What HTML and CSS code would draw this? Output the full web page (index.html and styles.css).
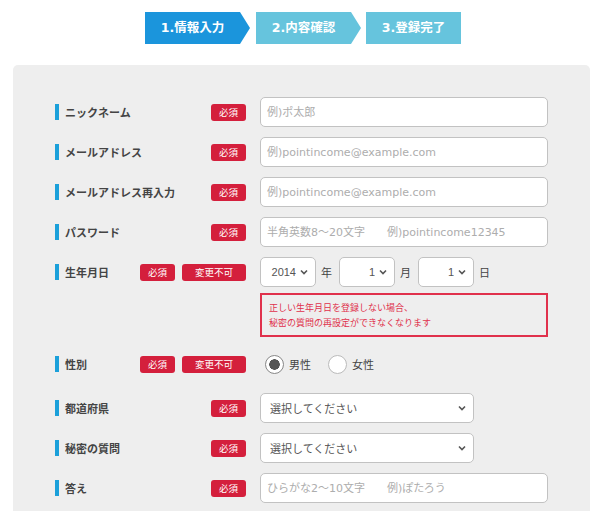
FILE: index.html
```html
<!DOCTYPE html>
<html>
  <head>
    <meta charset="utf-8">
    <title>会員登録</title>
    <link rel="stylesheet" href="styles.css">
  </head>
  <body>
    <ol class="steps">
      <li class="step step-arrow step-now">1.情報入力</li>
      <li class="step step-arrow">2.内容確認</li>
      <li class="step">3.登録完了</li>
    </ol>

    <form class="panel">
      <div class="row">
        <div class="head"><span class="label">ニックネーム</span><span class="badge">必須</span></div>
        <input class="text" type="text" placeholder="例)ポ太郎">
      </div>
      <div class="row">
        <div class="head"><span class="label">メールアドレス</span><span class="badge">必須</span></div>
        <input class="text" type="text" placeholder="例)pointincome@example.com">
      </div>
      <div class="row">
        <div class="head"><span class="label">メールアドレス再入力</span><span class="badge">必須</span></div>
        <input class="text" type="text" placeholder="例)pointincome@example.com">
      </div>
      <div class="row">
        <div class="head"><span class="label">パスワード</span><span class="badge">必須</span></div>
        <input class="text" type="password" placeholder="半角英数8～20文字　　例)pointincome12345">
      </div>
      <div class="row">
        <div class="head"><span class="label">生年月日</span><span class="badge">必須</span><span class="badge badge-wide">変更不可</span></div>
        <div class="field">
          <div class="birth">
            <select class="sel sel-num"><option>2014</option></select><span class="unit">年</span>
            <select class="sel sel-num"><option>1</option></select><span class="unit">月</span>
            <select class="sel sel-num"><option>1</option></select><span class="unit">日</span>
          </div>
          <p class="note">正しい生年月日を登録しない場合、<br>秘密の質問の再設定ができなくなります</p>
        </div>
      </div>
      <div class="row row-gender">
        <div class="head"><span class="label">性別</span><span class="badge">必須</span><span class="badge badge-wide">変更不可</span></div>
        <div class="radios">
          <label class="radio"><input type="radio" name="sex" checked><i></i>男性</label>
          <label class="radio"><input type="radio" name="sex"><i></i>女性</label>
        </div>
      </div>
      <div class="row">
        <div class="head"><span class="label">都道府県</span><span class="badge">必須</span></div>
        <select class="sel sel-wide"><option>選択してください</option></select>
      </div>
      <div class="row">
        <div class="head"><span class="label">秘密の質問</span><span class="badge">必須</span></div>
        <select class="sel sel-wide"><option>選択してください</option></select>
      </div>
      <div class="row">
        <div class="head"><span class="label">答え</span><span class="badge">必須</span></div>
        <input class="text" type="text" placeholder="ひらがな2～10文字　　例)ぽたろう">
      </div>
    </form>
  </body>
</html>
```

FILE: styles.css
```css
*{
  margin: 0;
  padding: 0;
  box-sizing: border-box;
}
body{
  background: #fff;
  font-family: "DejaVu Sans", "Noto Sans CJK JP", sans-serif;
  color: #444;
}

/* steps */
.steps{
  list-style: none;
  display: flex;
  padding: 12px 0 0 145px;
}
.step{
  width: 95px;
  height: 32px;
  line-height: 32px;
  text-align: center;
  color: #fff;
  font-size: 12.5px;
  font-weight: bold;
  background: #66c4dd;
}
.step-arrow{
  width: 105px;
  padding-right: 10px;
  margin-right: 6px;
  clip-path: polygon(0 0, 95px 0, 105px 50%, 95px 100%, 0 100%);
}
.step-arrow + .step-arrow{
  margin-right: 5px;
}
.step-now{
  background: #1b95dc;
}

/* panel */
.panel{
  margin: 21px 10px 0 13px;
  padding: 32px 42px 40px;
  background: #eeeeee;
  border-radius: 5px;
}
.row{
  display: flex;
  align-items: flex-start;
  margin-bottom: 10px;
}
.head{
  width: 191px;
  height: 30px;
  margin-right: 14px;
  display: flex;
  align-items: center;
  gap: 7px;
}
.label{
  display: flex;
  align-items: center;
  margin-right: auto;
  font-family: "Noto Sans CJK JP", sans-serif;
  font-size: 11px;
  font-weight: bold;
  color: #444;
}
.label::before{
  content: "";
  width: 4px;
  height: 16px;
  margin-right: 6px;
  background: #1ba0da;
}
.badge{
  width: 35px;
  height: 17px;
  line-height: 17px;
  text-align: center;
  border-radius: 3px;
  background: #d41f3c;
  color: #fff;
  font-family: "Noto Sans CJK JP", sans-serif;
  font-size: 9.5px;
}
.badge-wide{
  width: 64px;
}

.text{
  width: 288px;
  height: 30px;
  padding: 0 6px;
  border: 1px solid #c2c2c2;
  border-radius: 5px;
  background: #fff;
  font-family: "DejaVu Sans", "Noto Sans CJK JP", sans-serif;
  font-size: 11px;
  color: #333;
}
.text::placeholder{
  color: #adadad;
}

.sel{
  height: 30px;
  border: 1px solid #c2c2c2;
  border-radius: 5px;
  background: #fff url("data:image/svg+xml,%3Csvg xmlns='http://www.w3.org/2000/svg' width='8' height='6'%3E%3Cpath d='M1 1.5l3 3 3-3' fill='none' stroke='%23555' stroke-width='1.6'/%3E%3C/svg%3E") no-repeat right 7px center;
  appearance: none;
  -webkit-appearance: none;
  font-family: "Liberation Sans", "Noto Sans CJK JP", sans-serif;
  font-size: 11px;
  color: #555;
}
.sel-num{
  width: 56px;
  padding: 0 19px 0 6px;
  text-align-last: right;
}
.sel-wide{
  width: 214px;
  padding: 0 20px 0 9px;
  font-family: "Noto Sans CJK JP", sans-serif;
  font-size: 11px;
}

.birth{
  display: flex;
  align-items: center;
}
.unit{
  width: 23px;
  padding-left: 5px;
  font-family: "Noto Sans CJK JP", sans-serif;
  font-size: 11px;
  color: #444;
}
.note{
  width: 288px;
  margin-top: 6px;
  padding: 5px 7px;
  border: 2px solid #e0314c;
  font-family: "Noto Sans CJK JP", sans-serif;
  font-size: 9px;
  line-height: 15px;
  color: #e0314c;
}

.row-gender .head{
  height: 34px;
}
.radios{
  display: flex;
  align-items: center;
  height: 34px;
  padding-left: 5px;
  gap: 17px;
}
.radio{
  display: flex;
  align-items: center;
  font-family: "Noto Sans CJK JP", sans-serif;
  font-size: 11px;
  color: #444;
}
.radio input{
  display: none;
}
.radio i{
  width: 19px;
  height: 19px;
  margin-right: 5px;
  border: 1px solid #bbb;
  border-radius: 50%;
  background: #fff;
}
.radio input:checked + i{
  border-color: #888;
  background: radial-gradient(circle, #555 0 5px, #fff 5.5px);
}
.row-gender{
  margin-bottom: 12px;
}
```
